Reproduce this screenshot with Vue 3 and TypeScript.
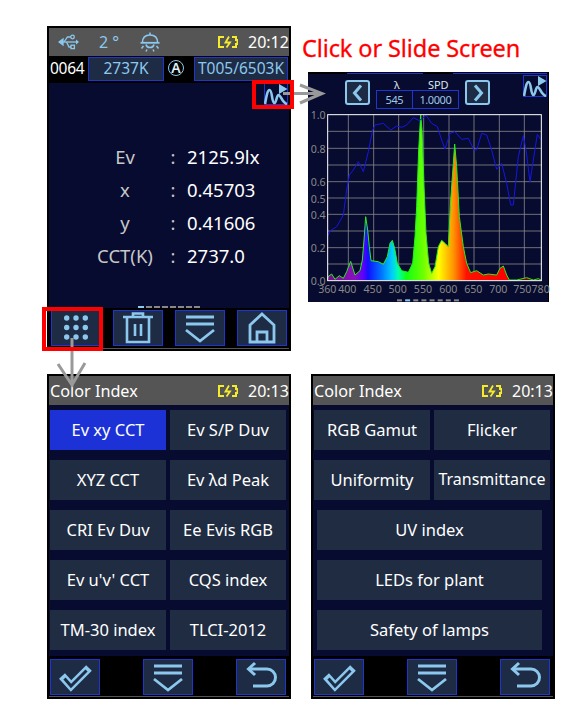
<script setup lang="ts">
const greenPts: [number, number][] = [[82,541],[84,530],[95,522],[105,538],[118,527],[130,535],[140,515],[152,484],[165,525],[180,512],[187,480],[192,420],[197,350],[203,390],[208,440],[213,482],[235,485],[250,493],[262,470],[270,430],[277,421],[284,445],[292,490],[305,512],[325,517],[338,490],[345,410],[350,320],[356,150],[362,45],[366,90],[372,260],[378,400],[386,490],[395,520],[405,500],[415,440],[425,421],[435,430],[445,440],[452,300],[460,190],[464,132],[470,200],[478,350],[490,440],[500,490],[512,518],[530,512],[550,525],[565,522],[590,525],[600,505],[610,498],[620,525],[628,540],[650,540],[680,533],[700,540],[715,536],[725,541]]
const bluePts: [number, number][] = [[82,410],[90,393],[110,380],[130,345],[140,270],[148,225],[160,210],[175,185],[190,215],[205,155],[218,90],[225,75],[250,70],[272,90],[290,78],[305,82],[320,75],[340,53],[358,62],[378,46],[395,70],[412,80],[425,120],[435,147],[450,100],[465,95],[485,118],[505,115],[522,150],[530,150],[545,100],[560,105],[575,150],[590,208],[605,190],[620,250],[632,315],[640,315],[655,170],[670,107],[678,150],[690,245],[700,180],[712,103],[722,118]]
const toLine = (p: [number, number][]) => p.map(([x, y]) => `${x},${y}`).join(' ')
const green = toLine(greenPts)
const blue = toLine(bluePts)
const hLines = [94, 145, 195, 245, 294, 343, 393, 443, 492]
const vLines = [145, 221, 296, 371, 447, 522, 598, 673]
const yLabels = [['1.0', 45], ['0.8', 145], ['0.6', 245], ['0.5', 295], ['0.4', 343], ['0.2', 443], ['0.0', 541]] as const
const xLabels = [['360', 82], ['400', 142], ['450', 218], ['500', 293], ['550', 369], ['600', 445], ['650', 520], ['700', 595], ['750', 667], ['780', 722]] as const
const stops = [[0, '#7a0a8a'], [0.13, '#8a10c0'], [0.17, '#5a00ff'], [0.19, '#1010ff'], [0.25, '#0070ff'], [0.3, '#00c8ff'], [0.33, '#00ffb0'], [0.37, '#10ff10'], [0.45, '#70ff00'], [0.52, '#ffff00'], [0.59, '#ff9000'], [0.65, '#ff1000'], [0.84, '#ff0000'], [0.88, '#800000'], [1, '#800000']] as const
const rows = [
  { label: 'Ev', value: '2125.9lx' },
  { label: 'x', value: '0.45703' },
  { label: 'y', value: '0.41606' },
  { label: 'CCT(K)', value: '2737.0' },
]
const indexA = ['Ev xy CCT', 'Ev S/P Duv', 'XYZ CCT', 'Ev λd Peak', 'CRI Ev Duv', 'Ee Evis RGB', "Ev u'v' CCT", 'CQS index', 'TM-30 index', 'TLCI-2012']
const indexB = ['RGB Gamut', 'Flicker', 'Uniformity', 'Transmittance']
const indexC = ['UV index', 'LEDs for plant', 'Safety of lamps']
const pages = [
  { id: 'a', narrow: indexA, wide: [] as string[] },
  { id: 'b', narrow: indexB, wide: indexC },
]
</script>

<template>
  <div class="page">
    <div class="row top">
      <section class="device">
        <header class="head">
          <svg class="usb" width="22" height="16" viewBox="0 0 22 16" fill="none" stroke="#8cc8ee" stroke-width="1.3">
            <path d="M4 8H18" />
            <path d="M1 8l4-3v6z" fill="#8cc8ee" />
            <path d="M6 8L9.500 3H12.500M8.500 8L11 13H13" />
            <circle cx="14.500" cy="3" r="1.800" />
            <rect x="13" y="11.200" width="3.400" height="3.400" />
            <path d="M18 5.500l3 2.500-3 2.500z" fill="#8cc8ee" stroke="none" />
          </svg>
          <span class="deg">2 °</span>
          <svg class="lamp" width="22" height="20" viewBox="0 0 22 20" fill="none" stroke="#8cc8ee" stroke-width="1.500">
            <path d="M3.500 10.500C3.500 5.500 6.500 3 11 3C15.500 3 18.500 5.500 18.500 10.500" />
            <path d="M11 0.500V3" />
            <path d="M1.500 10.800H20.500" stroke-width="1.800" />
            <path d="M7 12.500C7.500 15 9 15.500 11 15.500C13 15.500 14.500 15 15 12.500" />
            <path d="M4.500 14L2.500 16.500M17.500 14L19.500 16.500M8 17.500L7 19.500M14 17.500L15 19.500" />
          </svg>
          <svg class="bat" width="20" height="12" viewBox="0 0 20 12" fill="none" stroke="#f4ec2a" stroke-width="2">
            <path d="M6 1H1V11H6M14 1H18V4H19.500V8H18V11H14" />
            <path d="M11 0.500L7.500 6.500H12L8.500 11.500" stroke-width="1.800" />
          </svg>
          <span class="time">20:12</span>
        </header>
        <div class="status">
          <span class="count">0064</span>
          <span class="cell c1">2737K</span>
          <span class="auto">A</span>
          <span class="cell c2">T005/6503K</span>
        </div>
        <main class="measure">
          <span class="mini">
            <svg width="24" height="22" viewBox="0 0 24 22" fill="none">
              <path d="M1 21C2.500 13 3.500 7 5.500 7C8.500 7 7.500 20 10.500 20C12.500 20 12.500 12 14.500 12C17 12 18 20 23 21" stroke="#8cc8ee" stroke-width="2.600" />
              <path d="M15 1L23.500 6L15 11Z" fill="#8cc8ee" />
            </svg>
          </span>
          <div class="table">
            <div v-for="r in rows" :key="r.label" class="mrow">
              <span class="mlabel">{{ r.label }}</span>
              <span class="colon">:</span>
              <span class="mval">{{ r.value }}</span>
            </div>
          </div>
          <div class="dots"><i class="on" /><i /><i /><i /><i /><i /><i /><i /></div>
        </main>
        <footer class="foot four">
          <button class="btn">
            <svg width="50" height="36" viewBox="0 0 50 36" fill="#8cc8ee">
              <template v-for="y in [8, 17.5, 27]" :key="y">
                <circle v-for="x in [15.7, 25, 34.3]" :key="x" :cx="x" :cy="y" r="2.700" />
              </template>
            </svg>
          </button>
          <button class="btn">
            <svg width="50" height="36" viewBox="0 0 50 36" fill="none" stroke="#8cc8ee" stroke-width="2.600">
              <path d="M10 7H40M20 7V3.500H30V7M14 7V32H36V7" />
              <path d="M22 14V26M28 14V26" />
            </svg>
          </button>
          <button class="btn">
            <svg width="50" height="36" viewBox="0 0 50 36" fill="none" stroke="#8cc8ee" stroke-width="2.800">
              <path d="M11 7H39M11 14H39M11 20L25 31L39 20" />
            </svg>
          </button>
          <button class="btn">
            <svg width="50" height="36" viewBox="0 0 50 36" fill="none" stroke="#8cc8ee" stroke-width="2.800">
              <path d="M25 4L37 15V32H13V15Z" />
              <path d="M20 32V22H30V32" />
            </svg>
          </button>
        </footer>
      </section>

      <aside class="side">
        <h1 class="title">Click or Slide Screen</h1>
        <section class="panel">
          <div class="panel-edge"><i class="e1" /><i class="e2" /></div>
          <div class="chart-top">
            <span class="nav">
              <svg width="16" height="20" viewBox="0 0 16 20" fill="none" stroke="#8cc8ee" stroke-width="3"><path d="M11 2.500L4.500 10L11 17.500" /></svg>
            </span>
            <div class="read">
              <div class="read-h"><span>λ</span><span>SPD</span></div>
              <div class="read-b"><span>545</span><span>1.0000</span></div>
            </div>
            <span class="nav">
              <svg width="16" height="20" viewBox="0 0 16 20" fill="none" stroke="#8cc8ee" stroke-width="3"><path d="M5 2.500L11.500 10L5 17.500" /></svg>
            </span>
            <span class="mini side-mini">
              <svg width="24" height="22" viewBox="0 0 24 22" fill="none">
                <path d="M1 21C2.500 13 3.500 7 5.500 7C8.500 7 7.500 20 10.500 20C12.500 20 12.500 12 14.500 12C17 12 18 20 23 21" stroke="#8cc8ee" stroke-width="2.600" />
                <path d="M15 1L23.500 6L15 11Z" fill="#8cc8ee" />
              </svg>
            </span>
          </div>
          <svg class="chart" width="241" height="192" viewBox="24 30 723 576">
            <defs>
              <linearGradient id="spec" x1="82" x2="725" y1="0" y2="0" gradientUnits="userSpaceOnUse">
                <stop v-for="s in stops" :key="s[0]" :offset="s[0]" :stop-color="s[1]" />
              </linearGradient>
            </defs>
            <g stroke="#8a8a8a" stroke-width="2.400">
              <line v-for="y in hLines" :key="'h' + y" x1="83" x2="724" :y1="y" :y2="y" />
              <line v-for="x in vLines" :key="'v' + x" y1="44" y2="541" :x1="x" :x2="x" />
            </g>
            <polygon :points="green" fill="url(#spec)" />
            <polyline :points="green" fill="none" stroke="#22f01e" stroke-width="3" />
            <polyline :points="blue" fill="none" stroke="#1616e6" stroke-width="3" />
            <rect x="83" y="44" width="641" height="498" fill="none" stroke="#fff" stroke-width="3" />
            <g class="ticks">
              <text v-for="l in yLabels" :key="l[0]" x="32" :y="l[1] + 13">{{ l[0] }}</text>
              <text v-for="l in xLabels" :key="l[0]" :x="l[1]" y="579" text-anchor="middle">{{ l[0] }}</text>
            </g>
            <g fill="#888">
              <rect v-for="n in 8" :key="n" :x="291 + (n - 1) * 24.4" y="598" width="15" height="6" :fill="n === 2 ? '#8cc8ee' : '#888'" />
            </g>
          </svg>
        </section>
      </aside>
    </div>

    <div class="row bottom">
      <section v-for="p in pages" :key="p.id" class="device" :class="'dev-' + p.id">
        <header class="head index-head">
          <span class="idx">Color Index</span>
          <svg class="bat" width="20" height="12" viewBox="0 0 20 12" fill="none" stroke="#f4ec2a" stroke-width="2">
            <path d="M6 1H1V11H6M14 1H18V4H19.500V8H18V11H14" />
            <path d="M11 0.500L7.500 6.500H12L8.500 11.500" stroke-width="1.800" />
          </svg>
          <span class="time">20:13</span>
        </header>
        <main class="menu">
          <div class="grid">
            <span v-for="(t, i) in p.narrow" :key="t" class="tile" :class="{ sel: p.id === 'a' && i === 0, tight: t === 'Transmittance' }">{{ t }}</span>
          </div>
          <span v-for="t in p.wide" :key="t" class="tile wide">{{ t }}</span>
        </main>
        <footer class="foot three">
          <button class="btn">
            <svg width="50" height="36" viewBox="0 0 50 36" fill="none">
              <path d="M12 17L21 27L39 9" stroke="#8cc8ee" stroke-width="8" />
              <path d="M14.500 19.500L21 27L36.500 11.500" stroke="#1e2b44" stroke-width="3" />
            </svg>
          </button>
          <button class="btn">
            <svg width="50" height="36" viewBox="0 0 50 36" fill="none" stroke="#8cc8ee" stroke-width="2.800">
              <path d="M11 7H39M11 14H39M11 20L25 31L39 20" />
            </svg>
          </button>
          <button class="btn">
            <svg width="50" height="36" viewBox="0 0 50 36" fill="none" stroke="#8cc8ee" stroke-width="3">
              <path d="M13 10H31A8.500 8.500 0 0 1 31 27H17" />
              <path d="M19 4L12.500 10L19 16" />
            </svg>
          </button>
        </footer>
      </section>
    </div>

    <svg class="overlay" width="582" height="724" viewBox="0 0 582 724" fill="none">
      <path d="M283 93.500H320M300 85L322 93.500L300 103" stroke="#999" stroke-width="3" />
      <path d="M72 338V383M58 364L72 385L85 363" stroke="#999" stroke-width="3" />
      <rect x="254" y="82" width="38" height="25" stroke="#f00" stroke-width="4" />
      <rect x="44" y="309" width="57" height="40" stroke="#f00" stroke-width="4" />
    </svg>
  </div>
</template>

<style>
html, body { background: #fff; }
</style>

<style scoped>
.page { position: relative; width: 582px; height: 724px; padding: 26px 0 0 47px; box-sizing: border-box; font-family: "Noto Sans", "Open Sans", sans-serif; background: #fff; overflow: hidden; }
.row { display: flex; }
.top { gap: 11px; }
.bottom { margin-top: 23px; gap: 20px; }
.device { width: 244px; height: 325px; box-sizing: border-box; border: 2px solid #000; background: #000; display: flex; flex-direction: column; flex: none; }
.head { height: 28px; flex: none; background: #555; display: flex; align-items: center; position: relative; color: #fff; }
.usb { margin-left: 9px; }
.deg { margin-left: 19px; width: 40px; color: #8cc8ee; font-size: 16px; white-space: pre; }
.lamp { margin-left: 0; }
.bat { margin-left: auto; }
.time { font-size: 16px; margin-left: 10px; margin-right: 1px; width: 40px; }
.status { height: 27px; flex: none; display: flex; align-items: flex-start; color: #fff; }
.count { font-size: 15.500px; width: 39px; padding-left: 1px; box-sizing: border-box; line-height: 25px; letter-spacing: -.3px; }
.cell { height: 24px; margin-top: 1px; box-sizing: border-box; border: 1px solid #1f35d0; background: #1e2b44; color: #8cc8ee; font-size: 15.500px; line-height: 21px; text-align: center; white-space: nowrap; }
.c1 { width: 76px; }
.c2 { width: 94px; }
.auto { width: 16px; height: 16px; margin: 4px 10px 0 4px; border: 1.500px solid #8cc8ee; border-radius: 50%; box-sizing: border-box; font-size: 14px; font-weight: 600; line-height: 13px; text-align: center; color: #dfeefa; }
.measure { height: 225px; flex: none; background: #070b2f; position: relative; display: flex; flex-direction: column; }
.mini { display: block; width: 24px; height: 22px; box-sizing: border-box; border: 1px solid #1f35d0; }
.measure .mini { align-self: flex-end; margin-right: 1px; }
.mini svg { display: block; margin: -1px; }
.table { margin: 35px 0 0 0; }
.mrow { height: 33px; display: grid; grid-template-columns: 68px 8px 1fr; column-gap: 10px; padding-left: 42px; align-items: center; color: #fff; font-size: 18.500px; }
.mlabel { text-align: center; white-space: nowrap; color: #c8c8c8; }
.colon { text-align: center; color: #c8c8c8; }
.dots { position: absolute; left: 89px; bottom: 0; display: flex; gap: 2px; }
.dots i { width: 6px; height: 2px; background: #888; }
.dots i.on { background: #8cc8ee; }
.foot { height: 41px; flex: none; display: flex; box-sizing: border-box; padding: 2px 0 0 2px; border-bottom: 1px solid #555; background: #000; }
.four { gap: 12px; }
.three { justify-content: space-between; padding: 3px 3px 0 1px; }
.btn { width: 50px; height: 36px; padding: 0; margin: 0; box-sizing: border-box; border: 1px solid #1f35d0; background: #1e2b44; display: block; }
.btn svg { display: block; margin: -1px; }
.side { display: flex; flex-direction: column; }
.title { margin: 7px 0 0 0; font-size: 23.500px; line-height: 31px; font-weight: 400; color: #f00; white-space: nowrap; letter-spacing: -.1px; -webkit-text-stroke: .3px #f00; }
.panel { width: 241px; height: 230px; margin: 8px 0 0 6px; background: #070b2f; box-sizing: border-box; position: relative; border-right: 1px solid #000; }
.panel-edge { height: 2px; background: #000; position: relative; }
.panel-edge i { position: absolute; top: 1px; height: 1px; background: #1f35d0; }
.e1 { left: 39px; width: 76px; }
.e2 { left: 145px; width: 94px; }
.chart-top { height: 36px; display: flex; align-items: flex-start; position: relative; padding: 6px 0 0 37px; box-sizing: border-box; gap: 6px; }
.nav { width: 25px; height: 25px; flex: none; box-sizing: border-box; border: 2px solid #8cc8ee; border-radius: 3px; background: #1e2b44; display: flex; align-items: center; justify-content: center; }
.read { width: 83px; flex: none; font-size: 11px; color: #9fc6e6; text-align: center; letter-spacing: -.4px; }
.read-h { display: flex; height: 9px; line-height: 9px; color: #dbe6ee; letter-spacing: 0; }
.read-h span { flex: 1; }
.read-b { display: flex; height: 19px; margin-top: 1px; box-sizing: border-box; border: 1px solid #1f35d0; line-height: 17px; }
.read-b span { flex: 1; }
.read-b span + span { border-left: 1px solid #1f35d0; flex: 1.3; }
.side-mini { position: absolute; right: 1px; top: 1px; }
.chart { display: block; overflow: visible; }
.ticks { font-size: 32px; fill: #888; }
.index-head { height: 29px; }
.idx { font-size: 16.200px; margin-left: 1px; }
.menu { height: 251px; flex: none; box-sizing: border-box; padding: 5px 0 0 1px; background: #070b2f; display: flex; flex-direction: column; gap: 10px; }
.grid { display: grid; grid-template-columns: 116px 116px; grid-auto-rows: 40px; gap: 10px 4px; }
.tile { display: flex; align-items: center; justify-content: center; padding-bottom: 2px; box-sizing: border-box; background: #1f2c42; color: #fff; font-size: 16.500px; white-space: nowrap; }
.tile.tight { font-size: 16px; }
.tile.sel { background: #1c31d6; }
.tile.wide { width: 225px; height: 40px; flex: none; margin-left: 3px; }
.overlay { position: absolute; left: 0; top: 0; pointer-events: none; }
</style>
